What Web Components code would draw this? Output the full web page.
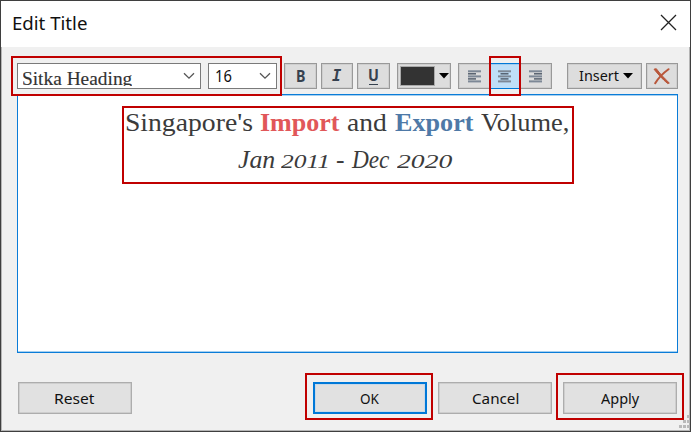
<!DOCTYPE html>
<html lang="en">
<head>
<meta charset="utf-8">
<title>Edit Title</title>
<style>
html,body{margin:0;width:691px;height:432px;overflow:hidden}
body{font-family:"Noto Sans","Open Sans",sans-serif;color:#111}
</style>
</head>
<body>
<edit-title-dialog></edit-title-dialog>
<script>
const define = (name, html, ready) => {
  const t = document.createElement('template');
  t.innerHTML = html;
  customElements.define(name, class extends HTMLElement {
    constructor() {
      super();
      this.attachShadow({mode: 'open'}).append(t.content.cloneNode(true));
    }
    connectedCallback() { if (ready) ready(this, this.shadowRoot); }
  });
};

// Text whose visible glyphs span exactly the width given by the "w" attribute.
const ctx = document.createElement('canvas').getContext('2d');
define('fit-text', `<style>
  :host{display:block;white-space:pre;overflow:visible;flex:none}
  span{display:inline-block;transform-origin:0 50%}
</style><span><slot></slot></span>`, (el, root) => {
  const w = +el.getAttribute('w'), cs = getComputedStyle(el);
  el.style.width = w + 'px';
  ctx.font = `${cs.fontStyle} ${cs.fontWeight} ${cs.fontSize} ${cs.fontFamily}`;
  const m = ctx.measureText(el.textContent);
  const s = w / (m.actualBoundingBoxLeft + m.actualBoundingBoxRight);
  root.querySelector('span').style.transform =
    `translateX(${m.actualBoundingBoxLeft * s}px) scaleX(${s})`;
});

define('tool-button', `<style>
  :host{display:flex;box-sizing:border-box;height:26px;border:1px solid #999;background:#ddd;box-shadow:inset 0 0 0 1px #cfcfcf;align-items:center;justify-content:center;flex:none;line-height:24px;font-size:15px}
</style><slot></slot>`);

define('combo-box', `<style>
  :host{display:flex;box-sizing:border-box;height:26px;border:1px solid #7a7a7a;background:#fff;justify-content:space-between;flex:none;overflow:hidden;padding:0 5px}
  svg{flex:none;margin-top:8px}
</style><slot></slot><svg width="12" height="8" viewBox="0 0 12 8"><path d="M1 1.2 6 6.2 11 1.2" fill="none" stroke="#555" stroke-width="1.3"/></svg>`);

define('align-icon', `<style>:host{display:block;width:14px;height:13px}svg{display:block}</style>
<svg width="14" height="13"><g></g></svg>`, (el, root) => {
  const rows = {
    left: [[0,13],[0,8],[0,13],[0,8],[0,13]],
    center: [[0,13],[2.5,8],[0,13],[2.5,8],[0,13]],
    right: [[0,13],[5,8],[0,13],[5,8],[0,13]]
  }[el.getAttribute('kind')];
  root.querySelector('g').innerHTML = rows.map(([x, w], i) =>
    `<rect x="${x}" y="${[.3,3.1,5.4,8.2,10.4][i]}" width="${w}" height="${i % 2 ? 1.4 : 2}" fill="${i % 2 ? '#4d5866' : '#7d8896'}"/>`).join('');
});

define('align-group', `<style>
  :host{display:flex;box-sizing:border-box;width:94px;height:26px;border:1px solid #999;background:#ddd;box-shadow:inset 0 0 0 1px #cfcfcf;flex:none}
  div{display:flex;align-items:center;justify-content:center;width:31px}
  .on{width:30px;margin:-1px 0;background:#bfdff8;border:solid #0078d7;border-width:1px 0;box-shadow:inset 0 1px #a3cdef}
  div:first-child align-icon{margin-right:2px}
</style><div><align-icon kind="left"></align-icon></div><div class="on"><align-icon kind="center"></align-icon></div><div><align-icon kind="right"></align-icon></div>`);

define('push-button', `<style>
  :host{display:flex;box-sizing:border-box;width:114px;height:32px;border:1px solid #adadad;background:#e1e1e1;justify-content:center;flex:none;font-size:15px;line-height:31px;box-shadow:inset 0 0 0 .5px #bbb}
  :host([primary]){border:2px solid #0078d7;line-height:29px;box-shadow:inset 0 0 0 1px #c9d9e8}
</style><slot></slot>`);

define('title-editor', `<style>
  :host{display:block;box-sizing:border-box;width:661px;height:259px;border:1px solid #0a7cd8;box-shadow:inset 0 1px #a6d0f0,inset 0 -1px #a6d0f0;background:#fff;color:#3b3b3b;font:25.5px "Liberation Serif",serif;padding-top:9px}
  .line{display:grid;height:37px;line-height:37px}
  .one{grid-template-columns:134px 87px 48px 86px 88px;padding-left:108px}
  .two{grid-template-columns:43px 55px 15px 46px 56px;padding-left:220px;font-style:italic}
  .red{color:#e15759;font-weight:bold}.blue{color:#4e79a7;font-weight:bold}
  .num{font-size:19px;line-height:41px}
</style>
<div class="line one"><fit-text w="126">Singapore's</fit-text><fit-text class="red" w="80">Import</fit-text><fit-text w="40">and</fit-text><fit-text class="blue" w="79">Export</fit-text><fit-text w="87">Volume,</fit-text></div>
<div class="line two"><fit-text w="36.5">Jan</fit-text><fit-text class="num" w="47">2011</fit-text><fit-text w="8">-</fit-text><fit-text w="39">Dec</fit-text><fit-text class="num" w="56">2020</fit-text></div>`);

define('title-bar', `<style>
  :host{display:flex;justify-content:space-between;height:45.5px;background:#fff;padding:0 13px 0 11.5px;box-sizing:border-box}
  fit-text{font-size:17.5px;line-height:45px}
  svg{margin-top:13px}
</style><fit-text w="73.5">Edit Title</fit-text><svg width="17" height="17"><path d="M1 1 16 16M16 1 1 16" stroke="#222" stroke-width="1.3"/></svg>`);

define('tool-bar', `<style>
  :host{display:flex;padding:16.5px 0 5px 16px;height:26px}
  .family{width:184px;margin-right:7px}.family fit-text{font:18.5px "Liberation Serif",serif;line-height:31px;height:22px;overflow:hidden;color:#333;-webkit-text-stroke:.15px #333}
  .size{width:69px;margin-right:7px}.size fit-text{font-size:15.5px;line-height:25px;margin-left:1.5px}
  .b{width:33px;margin-right:4px;color:#36414f;font:bold 16px "Noto Sans",sans-serif;line-height:24px}
  .i{width:32px}.i fit-text{font-family:"DejaVu Sans Mono";font-style:italic;font-size:15.5px}
  .u{margin-right:7px}
  .color{width:54px;margin-right:7px;justify-content:flex-start;padding-left:3px;gap:5px}
  .swatch{width:33px;height:18px;background:#333;box-shadow:0 0 0 1px #aaa}
  .insert{width:75px;margin:0 4px 0 15px;gap:3px;justify-content:flex-start;padding-left:11px}
  .insert fit-text{line-height:22px;margin-bottom:2px}
  .x{width:32px}
  .uu{height:17px;border-bottom:1.5px solid #36414f;box-sizing:border-box;width:9px}
  .uu fit-text{line-height:18px;margin-top:-2px;font-size:16px}
</style>
<combo-box class="family"><fit-text w="109">Sitka Heading</fit-text></combo-box>
<combo-box class="size"><fit-text w="16">16</fit-text></combo-box>
<tool-button class="b"><fit-text w="8">B</fit-text></tool-button>
<tool-button class="b i"><fit-text w="10">I</fit-text></tool-button>
<tool-button class="b u"><div class="uu"><fit-text w="9">U</fit-text></div></tool-button>
<tool-button class="color"><div class="swatch"></div><svg width="10" height="6"><path d="M0 0H10L5 5.5Z"/></svg></tool-button>
<align-group></align-group>
<tool-button class="insert"><fit-text w="40.5">Insert</fit-text><svg width="10" height="6"><path d="M0 0H10L5 5.5Z"/></svg></tool-button>
<tool-button class="x"><svg width="18" height="17" viewBox="0 0 18 17"><path d="M1 1.2 3.3.7C6.5 5 11 10 16.3 15L14.7 15.6C9.5 11.2 5 6.2 1 1.2Z" fill="#b9573b" stroke="#b9573b"/><path d="M15.5 1.2C10 5.2 5.5 9.7 2.2 15.2" fill="none" stroke="#b9573b" stroke-width="2" stroke-linecap="round"/></svg></tool-button>`);

define('button-row', `<style>
  :host{display:flex;padding:29px 0 0 17px;gap:11px}
  .reset{margin-right:170px}
</style>
<push-button class="reset"><fit-text w="40">Reset</fit-text></push-button>
<push-button primary><fit-text w="19.5">OK</fit-text></push-button>
<push-button><fit-text w="46.5">Cancel</fit-text></push-button>
<push-button><fit-text w="38.5">Apply</fit-text></push-button>`);

// Red outline laid over the dialog to point at a control.
define('call-out', `<style>:host{position:absolute;box-sizing:border-box;border:2px solid #c00000}</style>`, el => {
  const [x, y, w, h] = el.getAttribute('box').split(' ');
  Object.assign(el.style, {left: x + 'px', top: y + 'px', width: w + 'px', height: h + 'px'});
});

define('edit-title-dialog', `<style>
  :host{display:block;position:relative;box-sizing:border-box;width:691px;height:432px;border:1px solid #3f3f3f;background:#f0f0f0;overflow:hidden;box-shadow:inset 0 0 0 1px #b5b5b5}
  title-editor{margin-left:16px}
  .grip{position:absolute;right:0;bottom:2px}
</style>
<title-bar></title-bar><tool-bar></tool-bar><title-editor></title-editor><button-row></button-row>
<svg class="grip" width="12" height="14" fill="#b9b9b9"><path d="M9 0h3v3h-3zM5 5h3v3h-3zM9 5h3v3h-3zM1 10h3v3h-3zM5 10h3v3h-3zM9 10h3v3h-3z"/></svg>
<call-out box="10 55 271 40"></call-out><call-out box="488 55 32 40"></call-out><call-out box="121 105 452 78"></call-out><call-out box="304 372 128 47"></call-out><call-out box="555 372 128 47"></call-out>`);
</script>
</body>
</html>
